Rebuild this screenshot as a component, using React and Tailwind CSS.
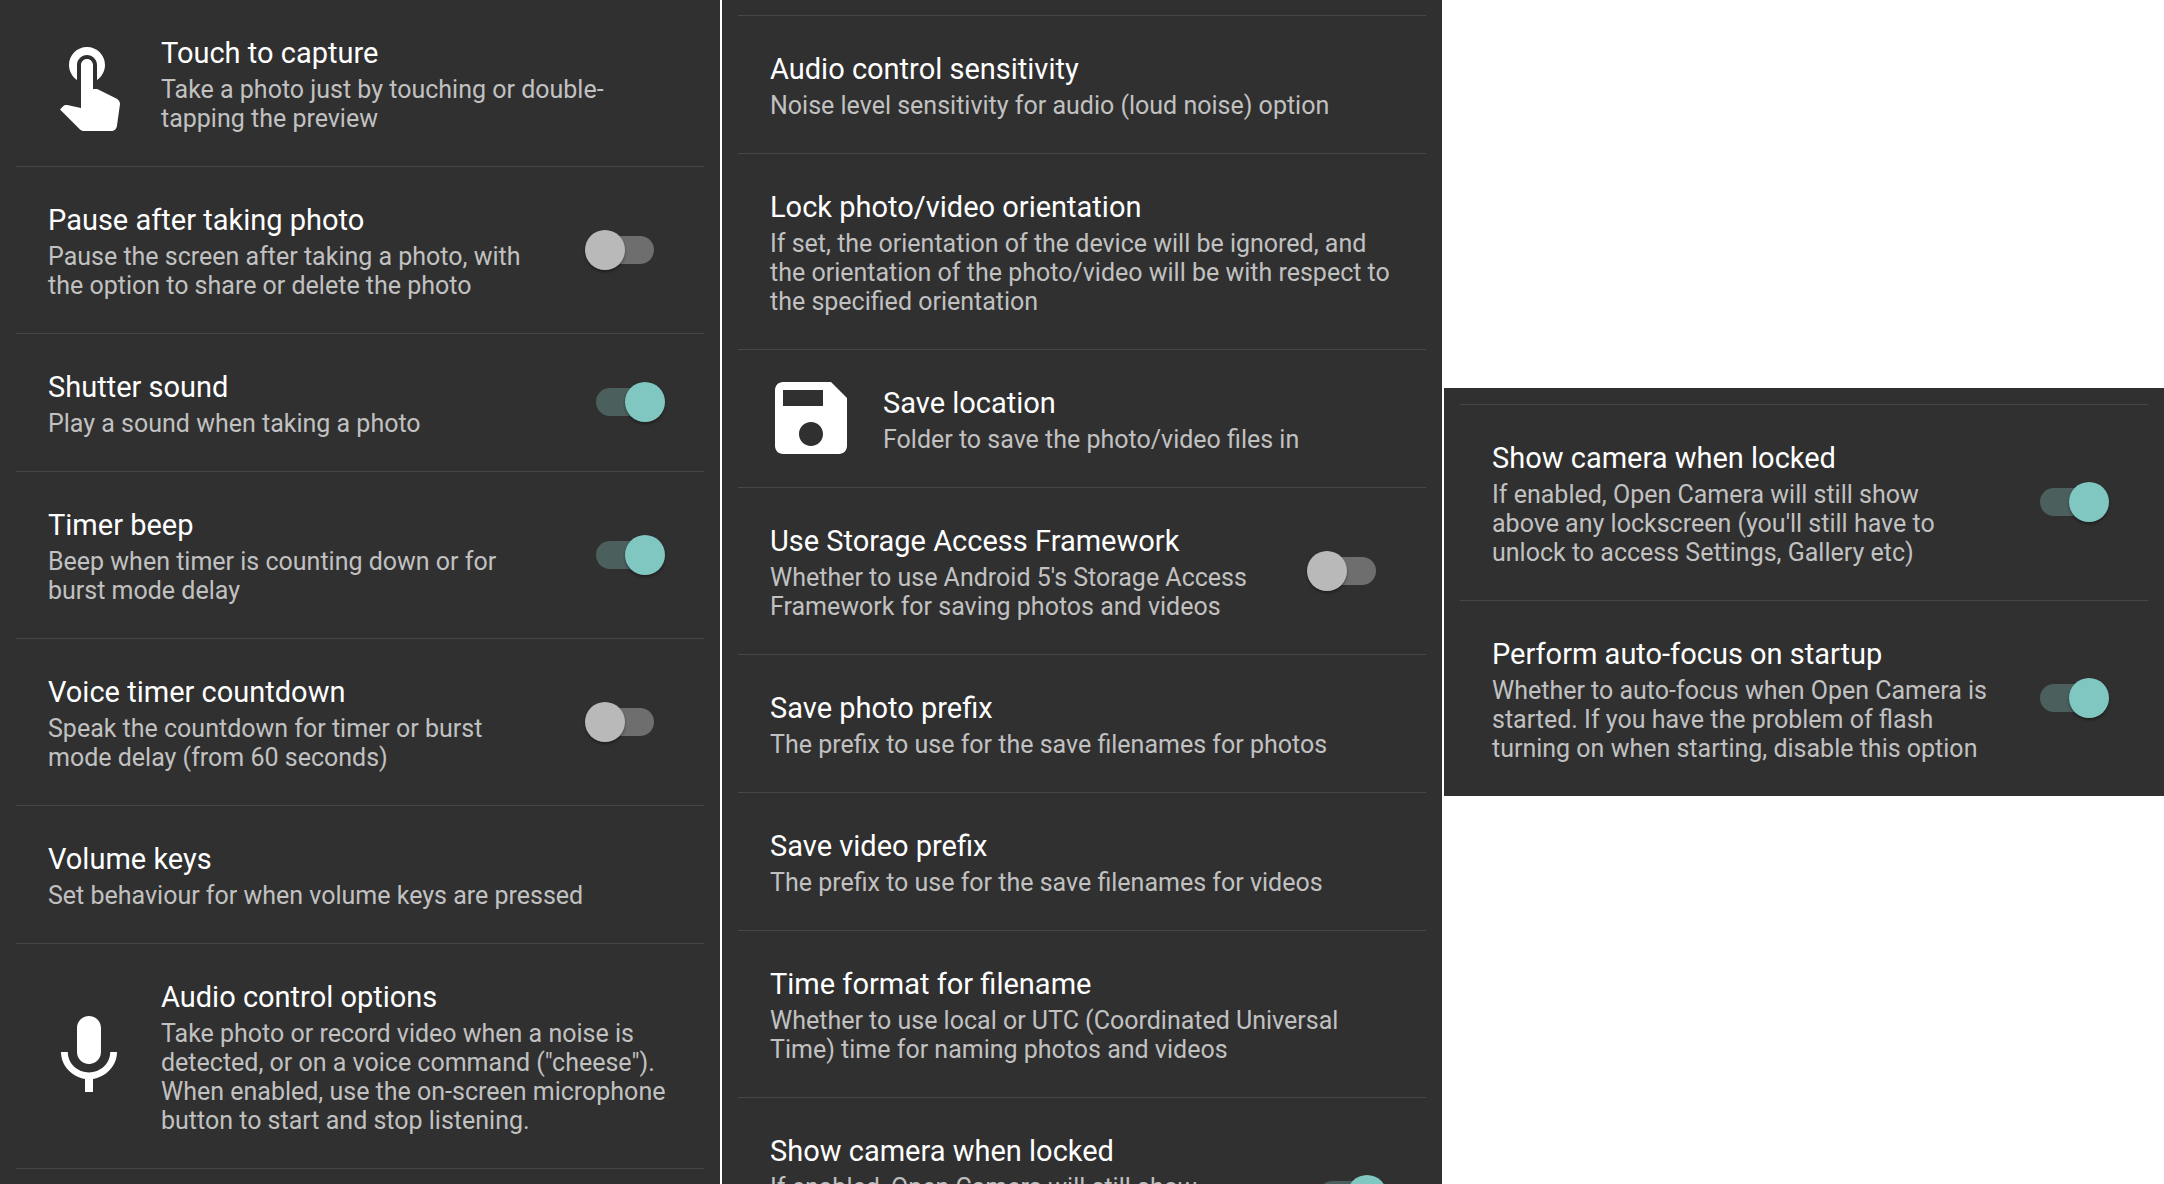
import React, { useId } from "react";

const ICONS = {
  touch:
    "M9 11.24V7.5C9 6.12 10.12 5 11.5 5S14 6.12 14 7.5v3.74c1.21-.81 2-2.18 2-3.74C16 5.01 13.99 3 11.5 3S7 5.01 7 7.5c0 1.56.79 2.93 2 3.74zm9.84 4.63l-4.54-2.26c-.17-.07-.35-.11-.54-.11H13v-6c0-.83-.67-1.5-1.5-1.5S10 6.67 10 7.5v10.74l-3.43-.72c-.08-.01-.15-.03-.24-.03-.31 0-.59.13-.79.33l-.79.8 4.94 4.94c.27.27.65.44 1.06.44h6.79c.75 0 1.33-.55 1.44-1.28l.75-5.27c.01-.07.02-.14.02-.2 0-.62-.38-1.16-.91-1.38z",
  mic: "M12 14c1.66 0 2.99-1.34 2.99-3L15 5c0-1.66-1.34-3-3-3S9 3.34 9 5v6c0 1.66 1.34 3 3 3zm5.3-3c0 3-2.54 5.1-5.3 5.1S6.7 14 6.7 11H5c0 3.41 2.72 6.23 6 6.72V21h2v-3.28c3.28-.48 6-3.3 6-6.72h-1.7z",
  save: "M17 3H5c-1.11 0-2 .9-2 2v14c0 1.1.89 2 2 2h14c1.1 0 2-.9 2-2V7l-4-4zm-5 16c-1.66 0-3-1.34-3-3s1.34-3 3-3 3 1.34 3 3-1.34 3-3 3zm3-10H5V5h10v4z",
};

const shooting = [
  { title: "Touch to capture", summary: "Take a photo just by touching or double-tapping the preview", icon: "touch" },
  { title: "Pause after taking photo", summary: "Pause the screen after taking a photo, with the option to share or delete the photo", on: false },
  { title: "Shutter sound", summary: "Play a sound when taking a photo", on: true },
  { title: "Timer beep", summary: "Beep when timer is counting down or for burst mode delay", on: true },
  { title: "Voice timer countdown", summary: "Speak the countdown for timer or burst mode delay (from 60 seconds)", on: false },
  { title: "Volume keys", summary: "Set behaviour for when volume keys are pressed" },
  {
    title: "Audio control options",
    summary:
      'Take photo or record video when a noise is detected, or on a voice command ("cheese"). When enabled, use the on-screen microphone button to start and stop listening.',
    icon: "mic",
  },
];

const lockScreen = {
  title: "Show camera when locked",
  summary: "If enabled, Open Camera will still show above any lockscreen (you'll still have to unlock to access Settings, Gallery etc)",
  on: true,
};

const saving = [
  { title: "Audio control sensitivity", summary: "Noise level sensitivity for audio (loud noise) option" },
  {
    title: "Lock photo/video orientation",
    summary:
      "If set, the orientation of the device will be ignored, and the orientation of the photo/video will be with respect to the specified orientation",
  },
  { title: "Save location", summary: "Folder to save the photo/video files in", icon: "save" },
  { title: "Use Storage Access Framework", summary: "Whether to use Android 5's Storage Access Framework for saving photos and videos", on: false },
  { title: "Save photo prefix", summary: "The prefix to use for the save filenames for photos" },
  { title: "Save video prefix", summary: "The prefix to use for the save filenames for videos" },
  { title: "Time format for filename", summary: "Whether to use local or UTC (Coordinated Universal Time) time for naming photos and videos" },
  lockScreen,
];

const startup = [
  lockScreen,
  {
    title: "Perform auto-focus on startup",
    summary:
      "Whether to auto-focus when Open Camera is started. If you have the problem of flash turning on when starting, disable this option",
    on: true,
  },
];

function Texts({ title, summary }) {
  return (
    <span className="block min-w-0 flex-1 pt-[35px] pb-[33px]">
      <span className="block text-[29px] leading-9 text-white">{title}</span>
      <span className="mt-1 block text-[25px] leading-[29px] text-[#c1c1c1]">{summary}</span>
    </span>
  );
}

function SwitchRow({ item }) {
  const id = useId();
  return (
    <label htmlFor={id} className="flex cursor-pointer items-center gap-10 pr-[39px] pl-8">
      <Texts title={item.title} summary={item.summary} />
      <input
        id={id}
        type="checkbox"
        role="switch"
        defaultChecked={item.on}
        className="relative mb-px h-10 w-20 shrink-0 cursor-pointer appearance-none before:absolute before:top-1.5 before:left-[11px] before:h-7 before:w-[58px] before:rounded-full before:bg-[#6e6e6e] after:absolute after:top-0 after:left-0 after:size-10 after:rounded-full after:bg-[#b9b9b9] after:shadow-[0_2px_3px_rgba(0,0,0,0.35)] checked:before:bg-[#4b5f5d] checked:after:left-10 checked:after:bg-[#80c7c1]"
      />
    </label>
  );
}

function ButtonRow({ item }) {
  return (
    <button type="button" className="flex w-full cursor-pointer items-center pr-7 pl-8 text-left">
      {item.icon && (
        <svg viewBox="0 0 24 24" className="mr-6 mb-px -ml-[7px] size-24 shrink-0 fill-white" aria-hidden="true">
          <path d={ICONS[item.icon]} />
        </svg>
      )}
      <Texts title={item.title} summary={item.summary} />
    </button>
  );
}

function Panel({ items, label, className, listClassName }) {
  return (
    <section aria-label={label} className={`flow-root overflow-hidden bg-[#303030] ${className}`}>
      <ul className={`mx-4 divide-y divide-[#474747] border-[#474747] ${listClassName}`}>
        {items.map((item) => (
          <li key={item.title}>
            {item.on === undefined ? <ButtonRow item={item} /> : <SwitchRow item={item} />}
          </li>
        ))}
      </ul>
    </section>
  );
}

export default function App() {
  return (
    <main className="grid h-screen grid-cols-3 grid-rows-[minmax(0,1fr)] gap-0.5 overflow-hidden bg-white font-[Roboto,sans-serif]">
      <Panel items={shooting} label="Shooting" className="h-full" listClassName="border-b" />
      <Panel items={saving} label="Saving" className="h-full" listClassName="mt-[15px] border-t" />
      <Panel items={startup} label="Startup" className="self-center" listClassName="mt-4 border-t" />
    </main>
  );
}
